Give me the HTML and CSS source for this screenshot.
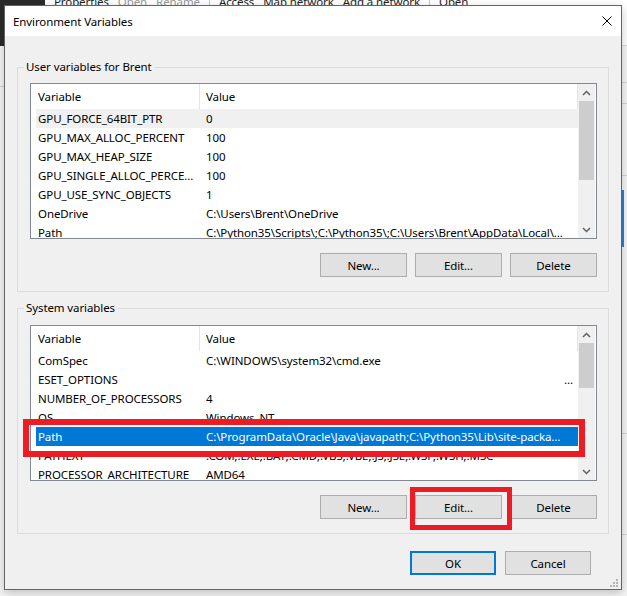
FILE: index.html
```html
<!DOCTYPE html>
<html>
<head>
    <title>Environment Variables</title>
    <link rel="stylesheet" href="styles.css">
</head>
<body>

<div class="explorer">
    <div class="explorer-top">
        <div class="explorer-dark"></div>
        <div class="ribbon">
            <span class="ribbon-item item-props">Properties</span>
            <span class="ribbon-item dim">Open</span>
            <span class="ribbon-item dim">Rename</span>
            <i class="ribbon-sep"></i>
            <span class="ribbon-item">Access</span>
            <span class="ribbon-item">Map network</span>
            <span class="ribbon-item">Add a network</span>
            <i class="ribbon-sep"></i>
            <span class="ribbon-item">Open</span>
        </div>
    </div>
    <div class="explorer-body">
        <div class="nav-edge">
            <div class="edge-cell nav-a"></div>
        </div>
        <div class="pane-edge">
            <div class="edge-cell pane-a"></div>
            <div class="edge-cell pane-b"></div>
            <div class="edge-cell pane-c"></div>
            <div class="edge-cell pane-d"></div>
            <div class="edge-cell pane-blue"></div>
            <div class="edge-cell pane-e"></div>
            <div class="edge-cell pane-f"></div>
        </div>
    </div>
</div>

<div class="dialog">
    <div class="titlebar">
        <span>Environment Variables</span>
        <svg class="close" width="10" height="10" viewBox="0 0 10 10">
            <path d="M0.5 0.5 L9.5 9.5 M9.5 0.5 L0.5 9.5" stroke="#000" stroke-width="1" fill="none"/>
        </svg>
    </div>

    <div class="dialog-body">
        <fieldset class="group">
            <legend>User variables for Brent</legend>
            <div class="list">
                <div class="list-view">
                    <div class="list-head">
                        <div class="col-var">Variable</div>
                        <div class="col-val">Value</div>
                    </div>
                    <div class="row hover"><div class="col-var">GPU_FORCE_64BIT_PTR</div><div class="col-val">0</div></div>
                    <div class="row"><div class="col-var">GPU_MAX_ALLOC_PERCENT</div><div class="col-val">100</div></div>
                    <div class="row"><div class="col-var">GPU_MAX_HEAP_SIZE</div><div class="col-val">100</div></div>
                    <div class="row"><div class="col-var">GPU_SINGLE_ALLOC_PERCE...</div><div class="col-val">100</div></div>
                    <div class="row"><div class="col-var">GPU_USE_SYNC_OBJECTS</div><div class="col-val">1</div></div>
                    <div class="row"><div class="col-var">OneDrive</div><div class="col-val">C:\Users\Brent\OneDrive</div></div>
                    <div class="row"><div class="col-var">Path</div><div class="col-val">C:\Python35\Scripts\;C:\Python35\;C:\Users\Brent\AppData\Local\...</div></div>
                </div>
                <div class="scrollbar">
                    <div class="sb-arrow">
                        <svg width="9" height="6" viewBox="0 0 9 6"><polyline points="1,5 4.5,1.5 8,5" stroke="#606060" stroke-width="1.5" fill="none"/></svg>
                    </div>
                    <div class="sb-track"><div class="sb-thumb thumb-user"></div></div>
                    <div class="sb-arrow">
                        <svg width="9" height="6" viewBox="0 0 9 6"><polyline points="1,1 4.5,4.5 8,1" stroke="#606060" stroke-width="1.5" fill="none"/></svg>
                    </div>
                </div>
            </div>
            <div class="buttons">
                <button class="btn">New...</button>
                <button class="btn">Edit...</button>
                <button class="btn">Delete</button>
            </div>
        </fieldset>

        <fieldset class="group group-system">
            <legend>System variables</legend>
            <div class="list">
                <div class="list-view">
                    <div class="list-head">
                        <div class="col-var">Variable</div>
                        <div class="col-val">Value</div>
                    </div>
                    <div class="row"><div class="col-var">ComSpec</div><div class="col-val">C:\WINDOWS\system32\cmd.exe</div></div>
                    <div class="row"><div class="col-var">ESET_OPTIONS</div><div class="col-val val-blank">...</div></div>
                    <div class="row"><div class="col-var">NUMBER_OF_PROCESSORS</div><div class="col-val">4</div></div>
                    <div class="row"><div class="col-var">OS</div><div class="col-val">Windows_NT</div></div>
                    <div class="row selected"><div class="col-var">Path</div><div class="col-val">C:\ProgramData\Oracle\Java\javapath;C:\Python35\Lib\site-packa...</div></div>
                    <div class="row"><div class="col-var">PATHEXT</div><div class="col-val">.COM;.EXE;.BAT;.CMD;.VBS;.VBE;.JS;.JSE;.WSF;.WSH;.MSC</div></div>
                    <div class="row"><div class="col-var">PROCESSOR_ARCHITECTURE</div><div class="col-val">AMD64</div></div>
                </div>
                <div class="scrollbar">
                    <div class="sb-arrow">
                        <svg width="9" height="6" viewBox="0 0 9 6"><polyline points="1,5 4.5,1.5 8,5" stroke="#606060" stroke-width="1.5" fill="none"/></svg>
                    </div>
                    <div class="sb-track"><div class="sb-thumb thumb-system"></div></div>
                    <div class="sb-arrow">
                        <svg width="9" height="6" viewBox="0 0 9 6"><polyline points="1,1 4.5,4.5 8,1" stroke="#606060" stroke-width="1.5" fill="none"/></svg>
                    </div>
                </div>
            </div>
            <div class="buttons">
                <button class="btn">New...</button>
                <button class="btn">Edit...</button>
                <button class="btn">Delete</button>
            </div>
        </fieldset>

        <div class="dialog-buttons">
            <button class="btn btn-default">OK</button>
            <button class="btn">Cancel</button>
        </div>
    </div>

    <!-- уголок для изменения размера -->
    <svg class="grip" width="8" height="8" viewBox="0 0 8 8" fill="#b4b4b4">
        <rect x="6" y="0" width="2" height="2"/>
        <rect x="3" y="3" width="2" height="2"/>
        <rect x="6" y="3" width="2" height="2"/>
        <rect x="0" y="6" width="2" height="2"/>
        <rect x="3" y="6" width="2" height="2"/>
        <rect x="6" y="6" width="2" height="2"/>
    </svg>
</div>

<!-- красные рамки поверх скриншота -->
<div class="mark mark-path"></div>
<div class="mark mark-edit"></div>

</body>
</html>
```

FILE: styles.css
```css
body {
    margin: 0;
    width: 627px;
    height: 596px;
    overflow: hidden;
    position: relative;
    background: #ececec;
    font-family: "Noto Sans", "DejaVu Sans", sans-serif;
    font-size: 11.5px;
    letter-spacing: -0.1px;
    color: #000;
}

/* окно проводника позади диалога */
.explorer-top {
    display: flex;
    height: 46px;
}

.explorer-dark {
    width: 45px;
    background: #2b2b2b;
}

.ribbon {
    flex: 1;
    display: flex;
    align-items: flex-start;
    background: #fff;
    padding-left: 9px;
    border-bottom: 1px solid #dadada;
}

.ribbon-item {
    line-height: 16px;
    margin-top: -6px;
    margin-right: 9px;
    color: #1e1e1e;
}

.ribbon-item.dim {
    color: #9a9a9a;
}

.ribbon-sep {
    width: 1px;
    height: 6px;
    background: #c8c8c8;
    margin-right: 9px;
}

.explorer-body {
    display: flex;
    justify-content: space-between;
    height: 550px;
    background: #f5f5f5;
}

.nav-edge {
    width: 4px;
}

.pane-edge {
    width: 5px;
    display: flex;
    flex-direction: column;
}

.edge-cell {
    border-bottom: 1px solid #d4d4d4;
}

.nav-a { height: 40px; }
.pane-a { height: 36px; }
.pane-b { height: 20px; }
.pane-c { height: 71px; }
.pane-d { height: 14px; border-bottom: none; }
.pane-blue { height: 57px; border-left: 2px solid #2b7fd0; border-bottom: none; }
.pane-e { height: 186px; }
.pane-f { height: 100px; }

/* диалог */
.dialog {
    position: absolute;
    left: 4px;
    top: 5px;
    width: 616px;
    border: 1px solid #646464;
    background: #f0f0f0;
    box-shadow: 0 3px 9px rgba(0, 0, 0, 0.22);
}

.titlebar {
    height: 30px;
    display: flex;
    align-items: center;
    justify-content: space-between;
    padding: 0 9px 0 8px;
    background: #fff;
}

.dialog-body {
    padding: 23px 12px 14px 12px;
}

.group {
    margin: 0;
    min-width: 0;
    padding: 8px 11px 14px 12px;
    border: 1px solid #dcdcdc;
}

.group-system {
    margin-top: 8px;
    padding-top: 9px;
}

.group legend {
    margin-left: -6px;
    padding: 0 2px;
    line-height: 16px;
}

.list {
    display: flex;
    height: 154px;
    padding-right: 1px;
    border: 1px solid #828790;
    background: #fff;
}

.list-view {
    flex: 1;
    min-width: 0;
    overflow: hidden;
}

.list-head {
    display: flex;
    height: 25px;
    border-right: 1px solid #e5e5e5;
}

.list-head .col-var {
    box-sizing: border-box;
    width: 169px;
    padding-left: 7px;
    line-height: 25px;
    border-right: 1px solid #e5e5e5;
}

.list-head .col-val {
    padding-left: 6px;
    line-height: 25px;
}

.row {
    display: flex;
    height: 19px;
    line-height: 19px;
    margin-left: 5px;
    white-space: nowrap;
}

.row .col-var {
    box-sizing: border-box;
    width: 170px;
    padding-left: 2px;
    overflow: hidden;
}

.row .col-val {
    flex: 1;
    min-width: 0;
    overflow: hidden;
}

.row .val-blank {
    text-align: right;
    padding-right: 5px;
}

.row.hover {
    background: #f0f0f0;
}

.row.selected {
    background: #0078d7;
    color: #fff;
}

.scrollbar {
    width: 17px;
    display: flex;
    flex-direction: column;
    background: #f0f0f0;
}

.sb-arrow {
    height: 17px;
    display: flex;
    align-items: center;
    justify-content: center;
}

.sb-track {
    flex: 1;
}

.sb-thumb {
    margin: 0 1px;
    background: #cdcdcd;
}

.thumb-user { height: 79px; }
.thumb-system { height: 45px; }

.buttons {
    display: flex;
    justify-content: flex-end;
    gap: 8px;
    margin-top: 14px;
}

.btn {
    box-sizing: border-box;
    width: 87px;
    height: 24px;
    padding: 0;
    border: 1px solid #adadad;
    background: #e1e1e1;
    font-family: inherit;
    font-size: 11.5px;
    letter-spacing: -0.1px;
    color: #000;
}

.dialog-buttons {
    display: flex;
    justify-content: flex-end;
    gap: 9px;
    margin-top: 17px;
    padding-right: 18px;
}

.dialog-buttons .btn {
    width: 86px;
}

.btn-default {
    border: 2px solid #0078d7;
}

.grip {
    position: absolute;
    right: 3px;
    bottom: 2px;
}

.mark {
    position: absolute;
    box-sizing: border-box;
    border: 6px solid #ed1c24;
}

.mark-path {
    left: 23px;
    top: 419px;
    width: 562px;
    height: 38px;
}

.mark-edit {
    left: 410px;
    top: 487px;
    width: 102px;
    height: 43px;
    border-width: 5px;
}
```
